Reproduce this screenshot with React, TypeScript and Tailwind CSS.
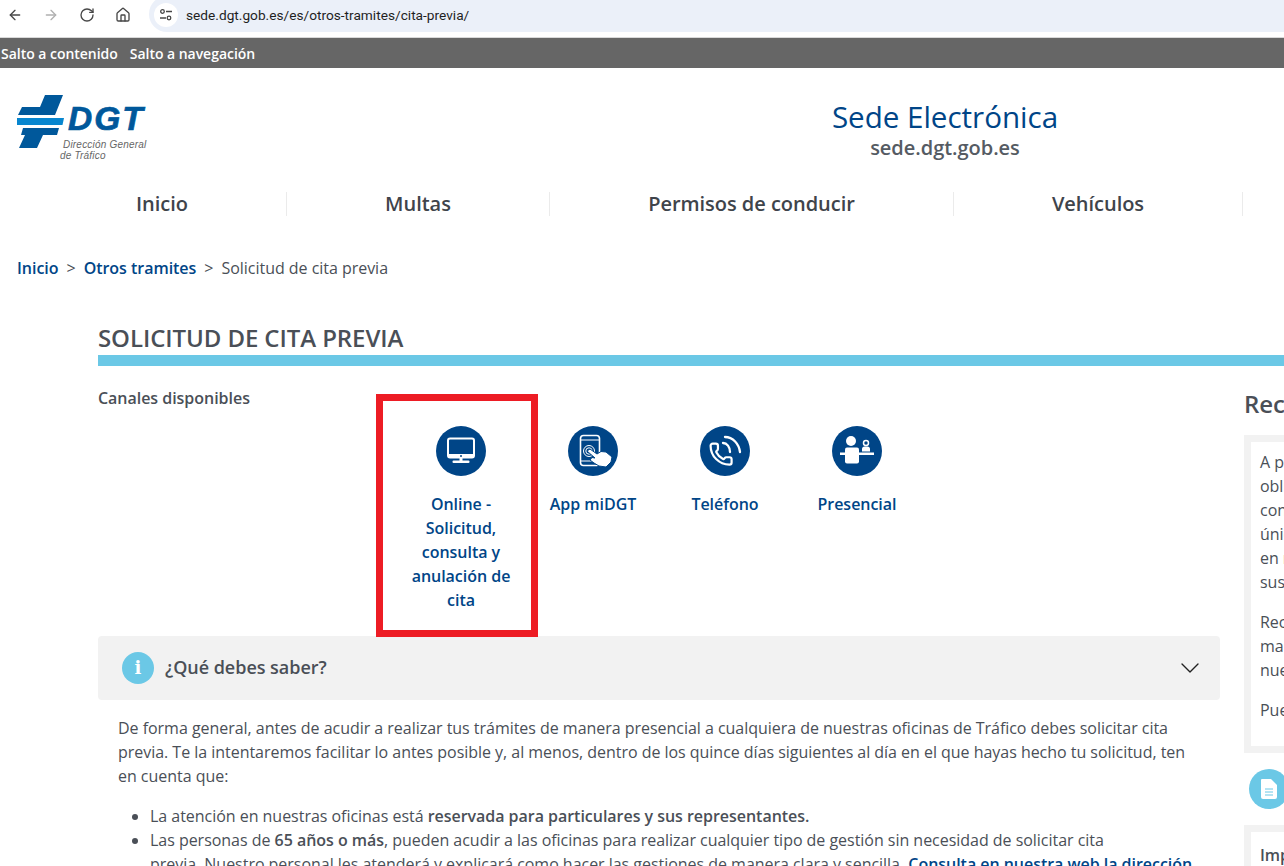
import { ArrowLeft, ArrowRight, ChevronDown, House, RotateCw } from "lucide-react";

const navItems = [
  { label: "Inicio", width: "w-[249px]" },
  { label: "Multas", width: "w-[263px]" },
  { label: "Permisos de conducir", width: "w-[404px]" },
  { label: "Vehículos", width: "w-[289px]" },
];

const MonitorIcon = () => (
  <svg viewBox="0 0 50 50" className="h-[50px] w-[50px]">
    <circle cx="25" cy="25" r="25" fill="#004587" />
    <rect x="12" y="12.500" width="26" height="19" rx="2" fill="none" stroke="#fff" strokeWidth="2" />
    <rect x="12" y="28" width="26" height="4" fill="#fff" />
    <circle cx="25" cy="30" r="1" fill="#004587" />
    <path d="M23.500 32h3v3h-3z" fill="#fff" />
    <rect x="16.500" y="34.500" width="17" height="2.500" rx="1" fill="#fff" />
  </svg>
);

const PhoneTouchIcon = () => (
  <svg viewBox="0 0 50 50" className="h-[50px] w-[50px]">
    <circle cx="25" cy="25" r="25" fill="#004587" />
    <rect x="12.500" y="9.500" width="19" height="30" rx="3" fill="none" stroke="#fff" strokeWidth="1.600" />
    <path d="M12.500 14h19M12.500 35h19" stroke="#fff" strokeWidth="1" />
    <circle cx="21" cy="25" r="5.500" fill="none" stroke="#fff" strokeWidth="1" />
    <circle cx="21" cy="25" r="3.200" fill="none" stroke="#fff" strokeWidth="1" />
    <path
      d="M19 25l3-2 7 5 4-2.500 5 .5 6 5-1 5-5 5-7-1-5-3-4-3 2-2.500 3 .5z"
      fill="#fff"
      stroke="#004587"
      strokeWidth="1"
      strokeLinejoin="round"
    />
  </svg>
);

const CallIcon = () => (
  <svg viewBox="0 0 50 50" className="h-[50px] w-[50px]">
    <circle cx="25" cy="25" r="25" fill="#004587" />
    <g transform="translate(8.500 15.500) scale(1.050)">
      <path
        d="M13.832 16.568a1 1 0 0 0 1.213-.303l.355-.465A2 2 0 0 1 17 15h3a2 2 0 0 1 2 2v3a2 2 0 0 1-2 2A18 18 0 0 1 2 4a2 2 0 0 1 2-2h3a2 2 0 0 1 2 2v3a2 2 0 0 1-.8 1.600l-.468.351a1 1 0 0 0-.292 1.233 14 14 0 0 0 6.392 6.384"
        fill="none"
        stroke="#fff"
        strokeWidth="2.100"
        strokeLinejoin="round"
      />
    </g>
    <path d="M23 17c4 0 7 4 7 9M25 11c8 0 14 7 15 15" fill="none" stroke="#fff" strokeWidth="2.300" strokeLinecap="round" />
  </svg>
);

const DeskIcon = () => (
  <svg viewBox="0 0 50 50" className="h-[50px] w-[50px]">
    <circle cx="25" cy="25" r="25" fill="#004587" />
    <circle cx="19" cy="15" r="5" fill="#fff" />
    <rect x="13" y="21.500" width="14" height="16" rx="2" fill="#fff" />
    <rect x="8" y="26.500" width="34" height="2.500" fill="#fff" />
    <circle cx="34" cy="17" r="2.500" fill="none" stroke="#fff" strokeWidth="1.500" />
    <path d="M30 25.500v-2.500c0-1.500 1-2.500 2.500-2.500h3c1.500 0 2.500 1 2.500 2.500v2.500z" fill="#fff" />
  </svg>
);

const channels = [
  { label: "Online - Solicitud, consulta y anulación de cita", icon: <MonitorIcon /> },
  { label: "App miDGT", icon: <PhoneTouchIcon /> },
  { label: "Teléfono", icon: <CallIcon /> },
  { label: "Presencial", icon: <DeskIcon /> },
];

export default function App() {
  return (
    <div className="relative h-[866px] w-[1284px] overflow-hidden bg-white font-['Open_Sans',sans-serif] tracking-[-0.03px] text-[#4a4f57]">
      {/* browser bar */}
      <div className="flex h-[38px] items-start border-b border-[#d9d9d9] bg-white">
        <ArrowLeft className="ml-[7px] mt-[7px] h-4 w-4 text-[#474747]" strokeWidth={2} />
        <ArrowRight className="ml-5 mt-[7px] h-4 w-4 text-[#b0b0b0]" strokeWidth={2} />
        <RotateCw className="ml-5 mt-[7px] h-4 w-4 text-[#474747]" strokeWidth={2} />
        <House className="ml-5 mt-[7px] h-4 w-4 text-[#474747]" strokeWidth={2} />
        <div className="-mt-1 ml-[18px] flex h-9 flex-1 items-center rounded-l-full bg-[#ebf0f9] pl-[5px] pt-[2px] font-['Roboto',sans-serif] text-[13.700px] tracking-normal text-[#1f1f1f]">
          <span className="flex h-6 w-6 items-center justify-center rounded-full bg-white">
            <svg viewBox="0 0 14 14" className="h-3.5 w-3.5" fill="none" stroke="#474747" strokeWidth="1.300">
              <circle cx="3.500" cy="3.500" r="1.800" />
              <path d="M7 3.500h6M1 10h6" />
              <circle cx="10" cy="10" r="1.800" />
            </svg>
          </span>
          <span className="ml-2">sede.dgt.gob.es/es/otros-tramites/cita-previa/</span>
        </div>
      </div>

      {/* skip links */}
      <div className="flex h-[30px] items-center gap-3 bg-[#666666] pl-px pt-px text-sm font-semibold text-white">
        <span>Salto a contenido</span>
        <span>Salto a navegación</span>
      </div>

      {/* header */}
      <header className="relative flex h-[124px]">
        <div className="ml-[17px] mt-[27px] w-[135px]">
          <div className="flex h-[54px] items-start">
            <svg viewBox="0 0 48 54" className="h-[54px] w-[48px] shrink-0">
              <path d="M28 0h18l-8 20H1l4-8h18z" fill="#00589b" />
              <path d="M0 23h47l-1.500 7H0z" fill="#0786cf" />
              <path d="M6 33h36l-2 7H26l-6 13H2l6-13H4z" fill="#00589b" />
            </svg>
            <span className="ml-[3px] mt-[9px] font-['Liberation_Sans',sans-serif] text-[33.500px] font-bold italic leading-[30px] tracking-[2px] text-[#00589b] [-webkit-text-stroke:0.7px_#00589b]">
              DGT
            </span>
          </div>
          <div className="-mt-[9px] pl-[43px] font-['Liberation_Sans',sans-serif] text-[10px] italic leading-[10.500px] tracking-[0.2px] text-[#666]">
            <div className="pl-[3px]">Dirección General</div>
            <div>de Tráfico</div>
          </div>
        </div>
        <div className="absolute left-[745px] top-[31px] w-[400px] text-center">
          <div className="text-[29.600px] font-medium leading-[36px] text-[#004587]">Sede Electrónica</div>
          <div className="text-xl font-semibold leading-[26px] text-[#555b63]">sede.dgt.gob.es</div>
        </div>
      </header>

      {/* main nav */}
      <nav className="flex h-6 pl-[38px]">
        {navItems.map((item) => (
          <div
            key={item.label}
            className={`${item.width} border-r border-[#ebebeb] text-center text-xl font-semibold leading-6 text-[#3f444b]`}
          >
            {item.label}
          </div>
        ))}
      </nav>

      {/* breadcrumb */}
      <div className="mt-[40px] flex items-center pl-[17px] text-base leading-6">
        <span className="font-semibold text-[#004587]">Inicio</span>
        <span className="mx-2">&gt;</span>
        <span className="font-semibold text-[#004587]">Otros tramites</span>
        <span className="mx-2">&gt;</span>
        <span>Solicitud de cita previa</span>
      </div>

      <main className="pl-[98px]">
        <h1 className="mt-[42px] text-2xl font-semibold leading-[32px] tracking-[-0.08px] text-[#4a4f57]">
          SOLICITUD DE CITA PREVIA
        </h1>
        <div className="mt-[1px] h-[11px] bg-[#6bc8e6]" />

        <div className="mt-[19px] flex gap-[24px]">
          <div className="w-[1122px] shrink-0">
            <div className="flex h-[251px]">
              <div className="w-[297px] pt-[1px] text-base font-semibold leading-6">Canales disponibles</div>
              <div className="flex">
                {channels.map((c) => (
                  <div key={c.label} className="flex w-[132px] flex-col items-center px-[14px] pt-[41px]">
                    {c.icon}
                    <div className="mt-[16px] text-center text-base font-semibold leading-6 text-[#004587]">{c.label}</div>
                  </div>
                ))}
              </div>
            </div>

            <div className="flex h-[64px] items-center rounded-sm bg-[#f2f2f2] pl-6 pr-[14px]">
              <span className="flex h-8 w-8 items-center justify-center rounded-full bg-[#6bc8e6] font-['DejaVu_Serif',serif] text-lg font-bold text-white">
                i
              </span>
              <span className="ml-[11px] flex-1 pb-[2px] text-lg font-semibold leading-6">¿Qué debes saber?</span>
              <ChevronDown className="h-8 w-8 text-[#222]" strokeWidth={1} />
            </div>

            <div className="pl-5 pr-5 pt-4 text-base leading-6">
              <p>
                De forma general, antes de acudir a realizar tus trámites de manera presencial a cualquiera de nuestras
                oficinas de Tráfico debes solicitar cita previa. Te la intentaremos facilitar lo antes posible y, al
                menos, dentro de los quince días siguientes al día en el que hayas hecho tu solicitud, ten en cuenta que:
              </p>
              <ul className="mt-4 list-disc pl-8">
                <li>
                  La atención en nuestras oficinas está{" "}
                  <strong className="font-semibold">reservada para particulares y sus representantes.</strong>
                </li>
                <li>
                  Las personas de <strong className="font-semibold">65 años o más</strong>, pueden acudir a las oficinas
                  para realizar cualquier tipo de gestión sin necesidad de solicitar cita
                  <br />
                  previa. Nuestro personal les atenderá y explicará como hacer las gestiones de manera clara y sencilla.{" "}
                  <span className="font-semibold text-[#004587]">Consulta en nuestra web la dirección</span>
                </li>
              </ul>
            </div>
          </div>

          {/* right column, cut off by the window */}
          <aside className="w-[300px] shrink-0 pt-[3px]">
            <div className="text-2xl font-semibold leading-8">Recomendaciones</div>
            <div className="mt-[15px] h-[318px] border-[7px] border-[#f2f2f2] pl-[9px] pt-[8px] text-base leading-6">
              <p>A partir de ahora es</p>
              <p>obligatorio</p>
              <p>contar con</p>
              <p>único</p>
              <p>en nuestras</p>
              <p>sus datos</p>
              <p className="mt-4">Recuerda</p>
              <p>mantener</p>
              <p>nuestras</p>
              <p className="mt-4">Puedes</p>
            </div>
            <div className="ml-[5px] mt-4 flex h-10 w-10 items-center justify-center rounded-full bg-[#6bc8e6]">
              <svg viewBox="0 0 16 20" className="h-[20px] w-4">
                <path d="M1 0h9l6 6v12a2 2 0 0 1-2 2H2a2 2 0 0 1-2-2V1a1 1 0 0 1 1-1z" fill="#fff" />
                <path d="M4 10h8M4 13h8M4 16h8" stroke="#6bc8e6" strokeWidth="1" />
              </svg>
            </div>
            <div className="mt-4 h-[60px] border-[7px] border-b-0 border-[#f2f2f2] pl-[9px] pt-[11px] text-base font-semibold leading-6">
              Importante
            </div>
          </aside>
        </div>
      </main>

      {/* annotation added on the screenshot */}
      <div className="absolute left-[376px] top-[394px] h-[243px] w-[162px] border-[7px] border-[#ed1c24]" />
    </div>
  );
}
